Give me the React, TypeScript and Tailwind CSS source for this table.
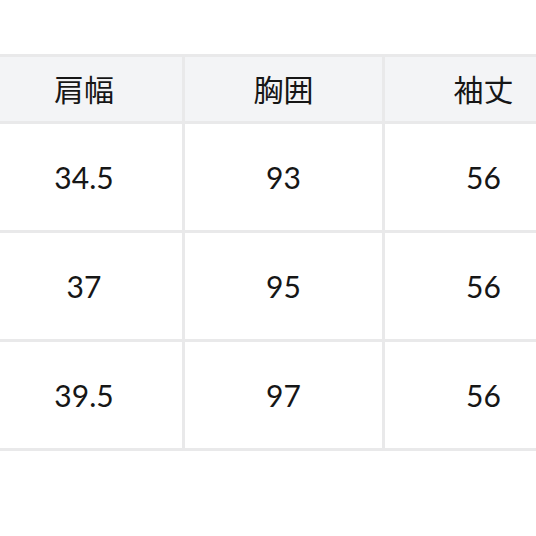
const header = ["肩幅", "胸囲", "袖丈"]
const rows = [
  ["34.5", "93", "56"],
  ["37", "95", "56"],
  ["39.5", "97", "56"],
]

export default function App() {
  return (
    <main className="w-[536px] h-[536px] overflow-hidden bg-white pt-[54px]">
      <div
        className="ml-[-17px] w-max grid grid-cols-[196px_197px_197px] gap-[3px] p-[3px] bg-[#e9e9ea]"
        style={{ fontFamily: "Lato, 'Noto Sans CJK JP', sans-serif" }}
      >
        {header.map((h) => (
          <div
            key={h}
            className="h-[64px] pb-[2px] bg-[#f3f4f6] flex items-center justify-center text-[30px] text-[#161616]"
            style={{ fontFamily: "'Noto Sans CJK JP', sans-serif" }}
          >
            {h}
          </div>
        ))}
        {rows.map((r, i) =>
          r.map((v, j) => (
            <div
              key={`${i}-${j}`}
              className="h-[106px] bg-white flex items-center justify-center text-[30px] text-[#161616]"
            >
              {v}
            </div>
          ))
        )}
      </div>
    </main>
  )
}
